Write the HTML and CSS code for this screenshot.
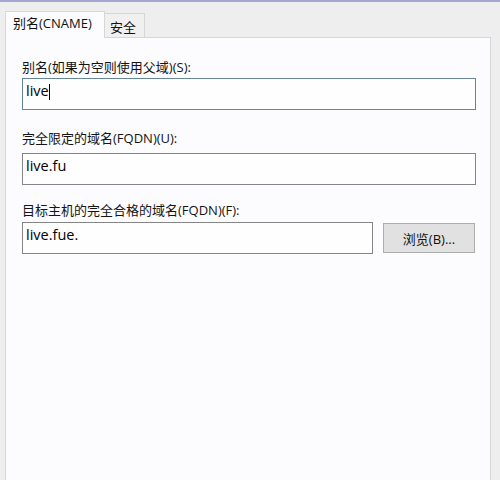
FILE: index.html
```html
<!DOCTYPE html>
<html>
<head>
<meta charset="utf-8">
<link rel="stylesheet" href="styles.css">
</head>
<body>
<div class="topline"></div>
<div class="tabs">
  <div class="tab active">别名(CNAME)</div>
  <div class="tab">安全</div>
</div>
<div class="panel">
  <div class="field f1">
    <div class="label">别名(如果为空则使用父域)(S):</div>
    <div class="input focused"><span>live</span><span class="caret"></span></div>
  </div>
  <div class="field f2">
    <div class="label">完全限定的域名(FQDN)(U):</div>
    <div class="input">live.fu</div>
  </div>
  <div class="field f3">
    <div class="label">目标主机的完全合格的域名(FQDN)(F):</div>
    <div class="row">
      <div class="input short">live.fue.</div>
      <div class="button">浏览(B)...</div>
    </div>
  </div>
</div>
</body>
</html>
```
FILE: styles.css
```css
html, body {
  margin: 0;
  padding: 0;
  width: 500px;
  height: 480px;
  overflow: hidden;
  background: #efeeef;
  font-family: "Open Sans", "Noto Sans CJK SC", sans-serif;
  font-size: 13px;
  color: #111;
}
.topline {
  height: 2px;
  background: #a4a7cf;
}
.tabs {
  display: flex;
  align-items: flex-end;
  padding-left: 5px;
  height: 35px;
  position: relative;
  z-index: 1;
}
.tab {
  height: 23px;
  line-height: 26px;
  padding: 0 8px 0 5px;
  border: 1px solid #d6d6d6;
  border-bottom: none;
  border-left: none;
  background: #f1f0f1;
  font-size: 13px;
}
.tab.active {
  height: 26px;
  line-height: 23px;
  padding: 0 8px 0 7px;
  border-left: 1px solid #d6d6d6;
  background: #fcfbfd;
  margin-bottom: -1px;
  width: 83px;
}
.panel {
  margin: 0 9px 0 5px;
  height: 460px;
  background: #fcfbfd;
  border: 1px solid #d6d6d6;
  padding-left: 16px;
}
.label {
  line-height: 18px;
  height: 18px;
  color: #141414;
}
.f1 { padding-top: 20px; }
.f1 .input { margin-top: 2px; }
.f2 { margin-top: 19px; }
.f2 .input { margin-top: 6px; }
.f3 { margin-top: 16px; }
.f3 .row { margin-top: 3px; }
.input {
  box-sizing: border-box;
  width: 454px;
  height: 32px;
  border: 1px solid #858585;
  background: #fefefe;
  padding: 2px 0 0 3px;
  font-size: 14.5px;
  line-height: 20px;
  color: #000;
  display: flex;
  align-items: flex-start;
}
.input.focused {
  border-color: #64859a;
}
.caret {
  display: inline-block;
  width: 1px;
  height: 16px;
  background: #000;
  margin-top: 3px;
}
.row {
  display: flex;
  gap: 10px;
  align-items: flex-start;
}
.input.short {
  width: 351px;
}
.button {
  box-sizing: border-box;
  width: 92px;
  height: 30px;
  margin-top: 1px;
  border: 1px solid #adadad;
  background: #e1e1e1;
  display: flex;
  align-items: center;
  justify-content: center;
  font-size: 13px;
  color: #111;
}
```
